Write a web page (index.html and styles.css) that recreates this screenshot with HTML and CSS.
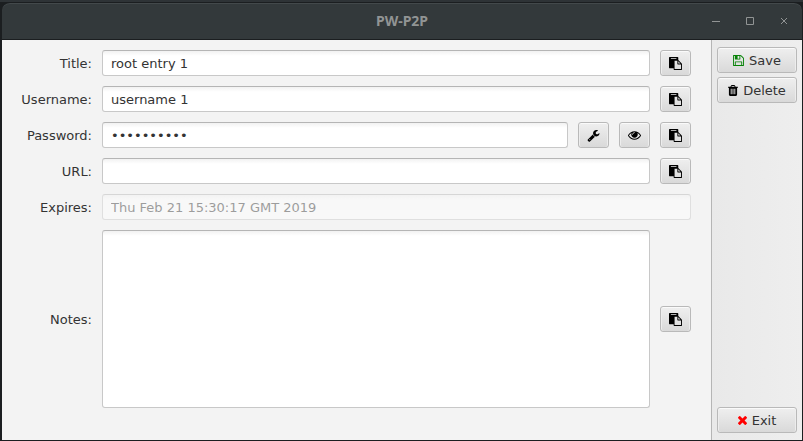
FILE: index.html
```html
<!DOCTYPE html>
<html lang="en">
<head>
<meta charset="utf-8">
<title>PW-P2P</title>
<link rel="stylesheet" href="styles.css">
</head>
<body>
<svg class="sprite" aria-hidden="true">
  <symbol id="paste" viewBox="0 0 1792 1792"><path d="M768 1664h896v-640h-416q-40 0-68-28t-28-68v-416h-384v1152zm256-1440v-64q0-13-9.500-22.500t-22.500-9.500h-704q-13 0-22.500 9.500t-9.500 22.500v64q0 13 9.500 22.500t22.500 9.500h704q13 0 22.500-9.500t9.500-22.500zm256 672h299l-299-299v299zm512 128v672q0 40-28 68t-68 28h-960q-40 0-68-28t-28-68v-160h-544q-40 0-68-28t-28-68v-1344q0-40 28-68t68-28h1088q40 0 68 28t28 68v328q21 13 36 28l408 408q28 28 48 76t20 88z"/></symbol>
  <symbol id="save" viewBox="128 128 1536 1536"><path d="M512 1536h768v-384h-768v384zm896 0h128v-896q0-14-10-38.500t-20-34.500l-281-281q-10-10-34-20t-39-10v416q0 40-28 68t-68 28h-576q-40 0-68-28t-28-68v-416h-128v1280h128v-416q0-40 28-68t68-28h832q40 0 68 28t28 68v416zm-384-928v-320q0-13-9.500-22.500t-22.500-9.500h-192q-13 0-22.500 9.500t-9.500 22.500v320q0 13 9.500 22.500t22.500 9.500h192q13 0 22.500-9.500t9.500-22.500zm640 32v928q0 40-28 68t-68 28h-1344q-40 0-68-28t-28-68v-1344q0-40 28-68t68-28h928q40 0 88 20t76 48l280 280q28 28 48 76t20 88z"/></symbol>
  <symbol id="trash" viewBox="192 128 1408 1536"><path d="M704 1376v-704q0-14-9-23t-23-9h-64q-14 0-23 9t-9 23v704q0 14 9 23t23 9h64q14 0 23-9t9-23zm256 0v-704q0-14-9-23t-23-9h-64q-14 0-23 9t-9 23v704q0 14 9 23t23 9h64q14 0 23-9t9-23zm256 0v-704q0-14-9-23t-23-9h-64q-14 0-23 9t-9 23v704q0 14 9 23t23 9h64q14 0 23-9t9-23zm-544-992h448l-48-117q-7-9-17-11h-317q-10 2-17 11zm928 32v64q0 14-9 23t-23 9h-96v948q0 83-47 143.500t-113 60.500h-832q-66 0-113-58.500t-47-141.500v-952h-96q-14 0-23-9t-9-23v-64q0-14 9-23t23-9h309l70-167q15-37 54-63t79-26h320q40 0 79 26t54 63l70 167h309q14 0 23 9t9 23z"/></symbol>
  <symbol id="wrench" viewBox="0 0 1792 1792"><path d="M448 1472q0-26-19-45t-45-19-45 19-19 45 19 45 45 19 45-19 19-45zm644-420l-682 682q-37 37-90 37-52 0-91-37l-106-108q-38-36-38-90 0-53 38-91l681-681q39 98 114.500 173.500t173.500 114.500zm634-435q0 39-23 106-47 134-164.500 217.500t-258.500 83.500q-185 0-316.500-131.500t-131.500-316.500 131.500-316.500 316.500-131.500q58 0 121.500 16.500t107.500 46.500q16 11 16 28t-16 28l-293 169v224l193 107q5-3 79-48.500t135.500-81 70.500-35.500q15 0 23.500 10t8.500 25z"/></symbol>
  <symbol id="eye" viewBox="0 64 1792 1792"><path d="M1664 960q-152-236-381-353 61 104 61 225 0 185-131.500 316.500t-316.500 131.500-316.500-131.500-131.500-316.500q0-121 61-225-229 117-381 353 133 205 333.500 326.500t434.500 121.500 434.500-121.500 333.500-326.500zm-720-384q0-20-14-34t-34-14q-125 0-214.500 89.500t-89.500 214.500q0 20 14 34t34 14 34-14 14-34q0-86 61-147t147-61q20 0 34-14t14-34zm848 384q0 34-20 69-140 230-376.500 368.500t-499.500 138.500-499.500-139-376.500-368q-20-35-20-69t20-69q140-229 376.500-368t499.500-139 499.500 139 376.500 368q20 35 20 69z"/></symbol>
  <symbol id="cross" viewBox="302 366 1188 1188"><path d="M1490 1322q0 40-28 68l-136 136q-28 28-68 28t-68-28l-294-294-294 294q-28 28-68 28t-68-28l-136-136q-28-28-28-68t28-68l294-294-294-294q-28-28-28-68t28-68l136-136q28-28 68-28t68 28l294 294 294-294q28-28 68-28t68 28l136 136q28 28 28 68t-28 68l-294 294 294 294q28 28 28 68z"/></symbol>
</svg>
<div class="window">
  <header class="titlebar">
    <h1 class="title">PW-P2P</h1>
    <div class="controls">
      <button class="control" type="button" aria-label="Minimize"><svg viewBox="0 0 8 8"><path d="M0 4.500h8"/></svg></button>
      <button class="control" type="button" aria-label="Maximize"><svg viewBox="0 0 8 8"><path d="M.5 .5h7v7h-7z"/></svg></button>
      <button class="control" type="button" aria-label="Close"><svg viewBox="0 0 8 8"><path d="M1 1l6 6M7 1l-6 6"/></svg></button>
    </div>
  </header>
  <div class="content">
    <form class="entry">
      <div class="row">
        <label class="label" for="title">Title:</label>
        <input class="field" id="title" type="text" value="root entry 1">
        <button class="btn" type="button" aria-label="Copy title"><svg class="icon"><use href="#paste"/></svg></button>
      </div>
      <div class="row">
        <label class="label" for="username">Username:</label>
        <input class="field" id="username" type="text" value="username 1">
        <button class="btn" type="button" aria-label="Copy username"><svg class="icon"><use href="#paste"/></svg></button>
      </div>
      <div class="row">
        <label class="label" for="password">Password:</label>
        <input class="field" id="password" type="password" value="0123456789">
        <button class="btn" type="button" aria-label="Generate password"><svg class="icon"><use href="#wrench"/></svg></button>
        <button class="btn" type="button" aria-label="Show password"><svg class="icon"><use href="#eye"/></svg></button>
        <button class="btn" type="button" aria-label="Copy password"><svg class="icon"><use href="#paste"/></svg></button>
      </div>
      <div class="row">
        <label class="label" for="url">URL:</label>
        <input class="field" id="url" type="text">
        <button class="btn" type="button" aria-label="Copy URL"><svg class="icon"><use href="#paste"/></svg></button>
      </div>
      <div class="row">
        <label class="label" for="expires">Expires:</label>
        <input class="field" id="expires" type="text" value="Thu Feb 21 15:30:17 GMT 2019" disabled>
      </div>
      <div class="row row-notes">
        <label class="label" for="notes">Notes:</label>
        <textarea class="field notes" id="notes"></textarea>
        <button class="btn" type="button" aria-label="Copy notes"><svg class="icon"><use href="#paste"/></svg></button>
      </div>
    </form>
    <aside class="actions">
      <button class="btn btn-wide" type="button"><svg class="icon icon-save"><use href="#save"/></svg><span class="btn-text">Save</span></button>
      <button class="btn btn-wide" type="button"><svg class="icon icon-trash"><use href="#trash"/></svg><span class="btn-text">Delete</span></button>
      <button class="btn btn-wide btn-last" type="button"><svg class="icon icon-exit"><use href="#cross"/></svg><span class="btn-text">Exit</span></button>
    </aside>
  </div>
</div>
</body>
</html>
```
FILE: styles.css
```css
* {
  box-sizing: border-box;
}

body {
  margin: 0;
  background: #262b30;
  color: #333;
  font: 13px/16px "DejaVu Sans", sans-serif;
}

.sprite {
  display: none;
}

.window {
  display: flex;
  flex-direction: column;
  min-height: 100vh;
  padding: 2px 1px 1px 2px;
  background: linear-gradient(#2e3336, #2e3336) top / 100% 2px no-repeat, #1b1e20;
}

.titlebar {
  display: grid;
  grid-template-columns: 1fr auto 1fr;
  align-items: center;
  height: 38px;
  border: solid #1b1e20;
  border-width: 1px 0;
  border-radius: 8px 8px 0 0;
  background: #33393b;
  box-shadow: inset 0 1px #43494b;
}

.title {
  grid-column: 2;
  margin: 0;
  color: #919494;
  font: bold 14px/18px "Noto Sans", sans-serif;
}

.controls {
  display: flex;
  justify-content: flex-end;
  gap: 10px;
  padding-right: 6px;
}

.control {
  display: flex;
  align-items: center;
  justify-content: center;
  width: 24px;
  height: 24px;
  padding: 0;
  border: 0;
  background: none;
}

.control svg {
  width: 8px;
  height: 8px;
  fill: none;
  stroke: #919494;
}

.content {
  display: flex;
  flex: 1;
}

.entry {
  display: flex;
  flex: 1;
  flex-direction: column;
  gap: 10px;
  min-width: 0;
  padding: 10px 20px 32px 10px;
  background: #f3f3f3;
}

.row {
  display: flex;
  align-items: center;
  gap: 10px;
}

.row-notes {
  flex: 1;
}

.label {
  flex: none;
  width: 80px;
  padding-top: 2px;
  text-align: right;
}

.field {
  flex: 1;
  min-width: 0;
  height: 26px;
  padding: 0 8px;
  border: 1px solid #c8c8c8;
  border-top-color: #b5b5b5;
  border-radius: 3px;
  background: linear-gradient(#f2f2f2, #fff 5px);
  color: #333;
  font: inherit;
}

.field:disabled {
  opacity: 0.45;
}

.notes {
  align-self: stretch;
  height: auto;
  resize: none;
}

.btn {
  display: flex;
  flex: none;
  align-items: center;
  justify-content: center;
  gap: 5px;
  width: 31px;
  height: 26px;
  padding: 0;
  border: 1px solid #b9b9b9;
  border-radius: 3px;
  background: linear-gradient(#efefef, #d9d9d9);
  box-shadow: inset 0 1px #fafafa, inset 1px 0 #ededed, inset -1px 0 #ededed;
  color: #333;
  font: inherit;
}

.btn-wide {
  width: auto;
}

.btn-text {
  padding-top: 2px;
}

.btn-last {
  margin-top: auto;
}

.icon {
  width: 13px;
  height: 13px;
  fill: #000;
}

.icon-save {
  width: 11px;
  height: 11px;
  fill: #078307;
}

.icon-trash {
  width: 10px;
  height: 11px;
}

.icon-exit {
  width: 9px;
  height: 9px;
  fill: #f00;
}

.actions {
  display: flex;
  flex: none;
  flex-direction: column;
  gap: 4px;
  width: 91px;
  padding: 7px 5px;
  border-left: 1px solid #b5b5b5;
  background: linear-gradient(90deg, #e9e9e9, #eee);
}
```
